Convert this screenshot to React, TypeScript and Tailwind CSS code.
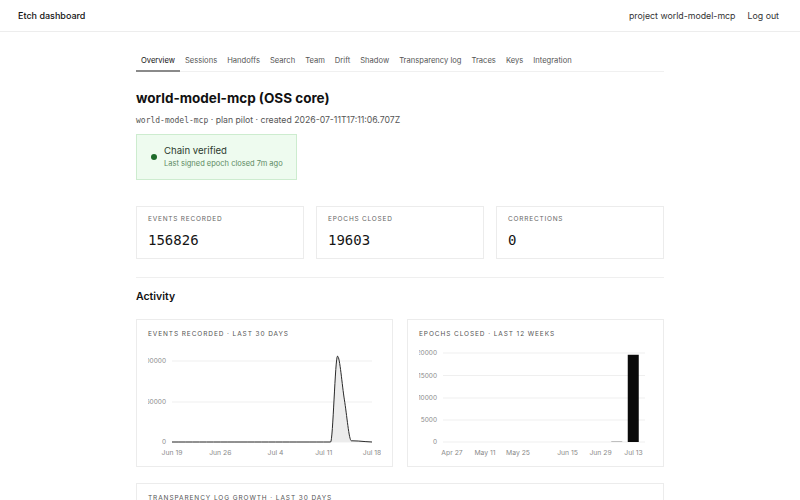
import React from "react";

const tabs = ["Overview","Sessions","Handoffs","Search","Team","Drift","Shadow","Transparency log","Traces","Keys","Integration"];

const sans = { fontFamily: "Inter, 'Noto Sans', sans-serif" } as React.CSSProperties;

function monotonePath(pts: [number, number][]) {
  const n = pts.length;
  const sign = (v: number) => (v < 0 ? -1 : 1);
  const t: number[] = new Array(n).fill(0);
  for (let i = 1; i < n - 1; i++) {
    const [x0, y0] = pts[i - 1], [x1, y1] = pts[i], [x2, y2] = pts[i + 1];
    const h0 = x1 - x0, h1 = x2 - x1;
    const s0 = (y1 - y0) / h0, s1 = (y2 - y1) / h1;
    const p = (s0 * h1 + s1 * h0) / (h0 + h1);
    t[i] = (sign(s0) + sign(s1)) * Math.min(Math.abs(s0), Math.abs(s1), 0.5 * Math.abs(p)) || 0;
  }
  const e = (a: [number, number], b: [number, number], tt: number) => {
    const h = b[0] - a[0];
    return h ? (3 * (b[1] - a[1]) / h - tt) / 2 : tt;
  };
  t[0] = e(pts[0], pts[1], t[1]);
  t[n - 1] = e(pts[n - 2], pts[n - 1], t[n - 2]);
  let d = `M${pts[0][0].toFixed(2)},${pts[0][1].toFixed(2)}`;
  for (let i = 0; i < n - 1; i++) {
    const [x0, y0] = pts[i], [x1, y1] = pts[i + 1];
    const dx = (x1 - x0) / 3;
    d += ` C${(x0 + dx).toFixed(2)},${(y0 + dx * t[i]).toFixed(2)} ${(x1 - dx).toFixed(2)},${(y1 - dx * t[i + 1]).toFixed(2)} ${x1.toFixed(2)},${y1.toFixed(2)}`;
  }
  return d;
}

function EventsChart() {
  // svg origin at abs (148,345)
  const vals = [0,0,0,0,0,0,0,0,0,0,0,0,0,0,0,0,0,0,0,0,0,0,0,0,106000,52000,1500,1200,500,0];
  const x0 = 24, w = 200;
  const pts = vals.map((v, i) => [x0 + (i * w) / 29, 96 - (v / 100000) * 81] as [number, number]);
  const line = monotonePath(pts);
  const area = `${line} L${x0 + w},96 L${x0},96 Z`;
  const yl = [[15, "100000"], [56, "50000"], [96, "0"]] as [number, string][];
  const xl = [[0, "Jun 19"], [7, "Jun 26"], [15, "Jul 4"], [22, "Jul 11"], [29, "Jul 18"]] as [number, string][];
  return (
    <svg width="233" height="113" className="block overflow-hidden" style={{ fontFamily: "Inter, sans-serif" }}>
      {yl.map(([y, t]) => (
        <g key={t}>
          <line x1={x0} x2={x0 + w} y1={y} y2={y} stroke="#efefef" strokeWidth="1" />
          <text x={18} y={y + 2.3} fontSize="6.5" fill="#8a8a8a" textAnchor="end">{t}</text>
        </g>
      ))}
      <path d={area} fill="#ececec" />
      <path d={line} fill="none" stroke="#2a2a2a" strokeWidth="1" />
      {xl.map(([i, t]) => (
        <text key={t} x={x0 + (i * w) / 29} y={109} fontSize="6.8" fill="#8a8a8a" textAnchor="middle">{t}</text>
      ))}
    </svg>
  );
}

function EpochsChart() {
  // svg origin at abs (419,345)
  const x0 = 24.75, band = 16.5;
  const yl = [[7, "20000"], [29.5, "15000"], [52, "10000"], [74, "5000"], [96, "0"]] as [number, string][];
  const xl = [[0, "Apr 27"], [2, "May 11"], [4, "May 25"], [7, "Jun 15"], [9, "Jun 29"], [11, "Jul 13"]] as [number, string][];
  return (
    <svg width="233" height="113" className="block overflow-hidden" style={{ fontFamily: "Inter, sans-serif" }}>
      {yl.map(([y, t]) => (
        <g key={t}>
          <line x1={24} x2={226} y1={y} y2={y} stroke="#efefef" strokeWidth="1" />
          <text x={18} y={y + 2.3} fontSize="6.5" fill="#8a8a8a" textAnchor="end">{t}</text>
        </g>
      ))}
      <rect x={x0 + 10 * band + 2.5} y={95.4} width={11} height={0.6} fill="#9a9a9a" />
      <rect x={x0 + 11 * band + 2.5} y={96 - (19603 / 5000) * 22.25} width={11} height={(19603 / 5000) * 22.25} fill="#0a0a0a" />
      {xl.map(([i, t]) => (
        <text key={t} x={x0 + i * band + band / 2} y={109} fontSize="6.8" fill="#8a8a8a" textAnchor="middle">{t}</text>
      ))}
    </svg>
  );
}

function Stat({ label, value }: { label: string; value: string }) {
  return (
    <div className="border border-[#ececec] bg-white pl-[11px] pt-[8px] pb-[9px]">
      <div className="text-[6.5px] leading-[8px] tracking-[0.12em] text-[#666] uppercase">{label}</div>
      <div className="mt-[8px] text-[14px] leading-[18px] text-[#151515]" style={{ fontFamily: "'DejaVu Sans Mono', 'Liberation Mono', monospace" }}>{value}</div>
    </div>
  );
}

export default function App() {
  return (
    <div className="w-[800px] h-[500px] overflow-hidden bg-white text-[#111]" style={sans}>
      <header className="h-[32px] border-b border-[#ededed] flex items-center justify-between pl-[18px] pr-[21px]">
        <div className="text-[9px] font-medium text-[#111]">Etch dashboard</div>
        <div className="flex items-center gap-[12px] text-[8.8px] text-[#333]">
          <span>project world-model-mcp</span>
          <span>Log out</span>
        </div>
      </header>
      <main className="w-[528px] mx-auto pt-[19px]">
        <nav className="flex border-b border-[#f0f0f0]">
          {tabs.map((t, i) => (
            <div
              key={t}
              className={
                "px-[5px] pt-[5px] pb-[4px] leading-[10px] text-[7.6px] -mb-px border-b-2 " +
                (i === 0 ? "border-[#8a8a8a] text-[#111]" : "border-transparent text-[#555]")
              }
            >
              {t}
            </div>
          ))}
        </nav>
        <h1 className="mt-[18px] text-[13.5px] leading-[16px] font-bold text-[#111]">world-model-mcp (OSS core)</h1>
        <div className="mt-[8px] leading-[12px] text-[8.7px] text-[#555]">
          <span className="text-[8px]" style={{ fontFamily: "'DejaVu Sans Mono', monospace" }}>world-model-mcp</span>
          <span> · plan pilot · created 2026-07-11T17:11:06.707Z</span>
        </div>
        <div className="mt-[7px] w-[161px] border border-[#cdeccf] bg-[#eefbef] pl-[14px] pt-[10px] pb-[10px] flex items-center gap-[7px]">
          <div className="w-[6px] h-[6px] rounded-full bg-[#1d6b2a]" />
          <div>
            <div className="text-[9.6px] leading-[12px] text-[#2b3a2d]">Chain verified</div>
            <div className="mt-[2px] text-[7.5px] leading-[10px] text-[#5d8a63]">Last signed epoch closed 7m ago</div>
          </div>
        </div>
        <div className="mt-[26px] grid grid-cols-3 gap-[12px]">
          <Stat label="Events recorded" value="156826" />
          <Stat label="Epochs closed" value="19603" />
          <Stat label="Corrections" value="0" />
        </div>
        <div className="mt-[18px] border-t border-[#efefef]" />
        <h2 className="mt-[12px] text-[10.5px] leading-[14px] font-semibold text-[#111]">Activity</h2>
        <div className="mt-[15px] grid grid-cols-2 gap-[14px]">
          <div className="border border-[#ececec] pl-[11px] pt-[10px] pb-[7px]">
            <div className="text-[6.5px] leading-[8px] tracking-[0.14em] text-[#555] uppercase">Events recorded · last 30 days</div>
            <div className="mt-[8px]"><EventsChart /></div>
          </div>
          <div className="border border-[#ececec] pl-[11px] pt-[10px] pb-[7px]">
            <div className="text-[6.5px] leading-[8px] tracking-[0.14em] text-[#555] uppercase">Epochs closed · last 12 weeks</div>
            <div className="mt-[8px]"><EpochsChart /></div>
          </div>
        </div>
        <div className="mt-[16px] border border-[#ececec] pl-[11px] pt-[10px] pb-[40px]">
          <div className="text-[6.5px] leading-[8px] tracking-[0.14em] text-[#555] uppercase">Transparency log growth · last 30 days</div>
        </div>
      </main>
    </div>
  );
}
